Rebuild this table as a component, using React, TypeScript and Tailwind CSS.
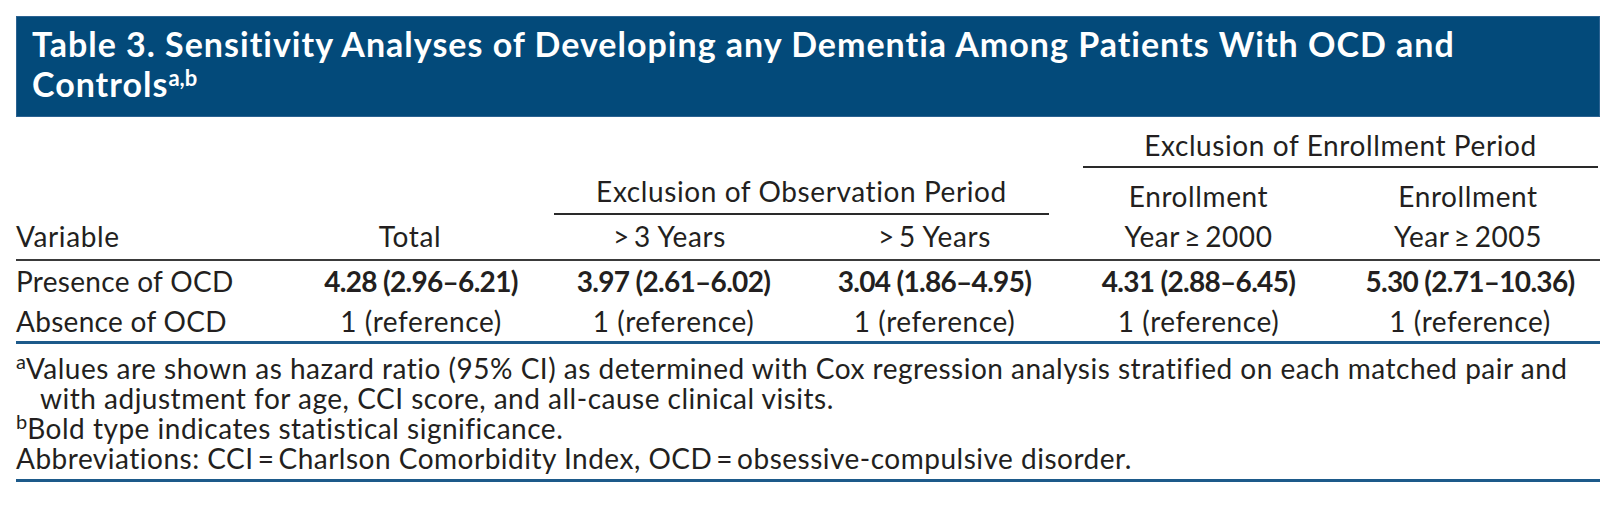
const rows = [
  { label: "Presence of OCD", values: ["4.28 (2.96–6.21)", "3.97 (2.61–6.02)", "3.04 (1.86–4.95)", "4.31 (2.88–6.45)", "5.30 (2.71–10.36)"], bold: true },
  { label: "Absence of OCD", values: ["1 (reference)", "1 (reference)", "1 (reference)", "1 (reference)", "1 (reference)"], bold: false },
];

const cols = "grid grid-cols-[271px_256px_261px_261px_267px_268px]";

export default function App() {
  return (
    <div className="bg-white pt-[16px] pl-[16px] text-[#231f20] font-['Lato',sans-serif]">
      <div className="w-[1584px]">
        {/* Title banner */}
        <div className="border border-[#2b6291] bg-[#034a7a] pl-[15px] pt-[7px] pb-[12px] text-[34px] font-bold leading-[40px] tracking-[1px] text-white">
          Table 3. Sensitivity Analyses of Developing any Dementia Among Patients With OCD and
          <br />
          Controls<sup className="text-[22px] font-bold tracking-normal">a,b</sup>
        </div>

        {/* Column headers */}
        <div className={`${cols} mt-[11px] text-[28px] leading-[34px] tracking-[0.6px]`}>
          <div className="col-span-2 col-start-5 row-start-1 pl-[18px] pr-[2px]">
            <div className="text-center">Exclusion of Enrollment Period</div>
            <div className="mt-[4px] h-[2px] bg-[#2a2a2a]" />
          </div>
          <div className="col-span-2 col-start-3 row-start-2 pl-[11px] pr-[16px] pt-[6px]">
            <div className="text-center">Exclusion of Observation Period</div>
            <div className="mt-[5px] h-[2px] bg-[#2a2a2a]" />
          </div>
          <div className="col-start-1 row-start-3 pt-[4px] pb-[6px]">Variable</div>
          <div className="col-start-2 row-start-3 pt-[4px] pb-[6px] pr-[10px] text-center">Total</div>
          <div className="col-start-3 row-start-3 pt-[4px] pb-[6px] pr-[8px] text-center">&gt;{"\u2009"}3 Years</div>
          <div className="col-start-4 row-start-3 pt-[4px] pb-[6px] text-center">&gt;{"\u2009"}5 Years</div>
          <div className="col-start-5 row-span-2 row-start-2 self-end pb-[3px] text-center leading-[40px]">
            <div>Enrollment</div>
            <div>Year{"\u2009"}≥{"\u2009"}2000</div>
          </div>
          <div className="col-start-6 row-span-2 row-start-2 self-end pb-[3px] pl-[4px] text-center leading-[40px]">
            <div>Enrollment</div>
            <div>Year{"\u2009"}≥{"\u2009"}2005</div>
          </div>
        </div>
        <div className="h-[2px] bg-[#3a3a3a]" />

        {/* Body */}
        {rows.map((r) => (
          <div key={r.label} className={`${cols} text-[28px] leading-[40px] tracking-[0.6px]`}>
            <div className="tracking-[0.3px]">{r.label}</div>
            {r.values.map((v, i) => (
              <div key={i} className={`text-center ${i === 0 ? "pl-[12px]" : ""} ${i === 4 ? "pl-[8px]" : ""} ${r.bold ? "font-bold tracking-[-0.7px]" : ""}`}>
                {v}
              </div>
            ))}
          </div>
        ))}
        <div className="h-[3px] bg-[#1d5a8a]" />

        {/* Footnotes */}
        <div className="pt-[9px] pb-[6px] text-[28px] leading-[30px] tracking-[0.5px] whitespace-nowrap">
          <div className="pl-[24px] -indent-[24px]">
            <sup className="text-[20px] tracking-normal">a</sup>Values are shown as hazard ratio (95% CI) as determined with Cox regression analysis stratified on each matched pair and
            <br />
            with adjustment for age, CCI score, and all-cause clinical visits.
          </div>
          <div>
            <sup className="text-[20px] tracking-normal">b</sup>Bold type indicates statistical significance.
          </div>
          <div>Abbreviations: CCI{"\u2009"}={"\u2009"}Charlson Comorbidity Index, OCD{"\u2009"}={"\u2009"}obsessive-compulsive disorder.</div>
        </div>
        <div className="h-[3px] bg-[#1d5a8a]" />
      </div>
    </div>
  );
}
